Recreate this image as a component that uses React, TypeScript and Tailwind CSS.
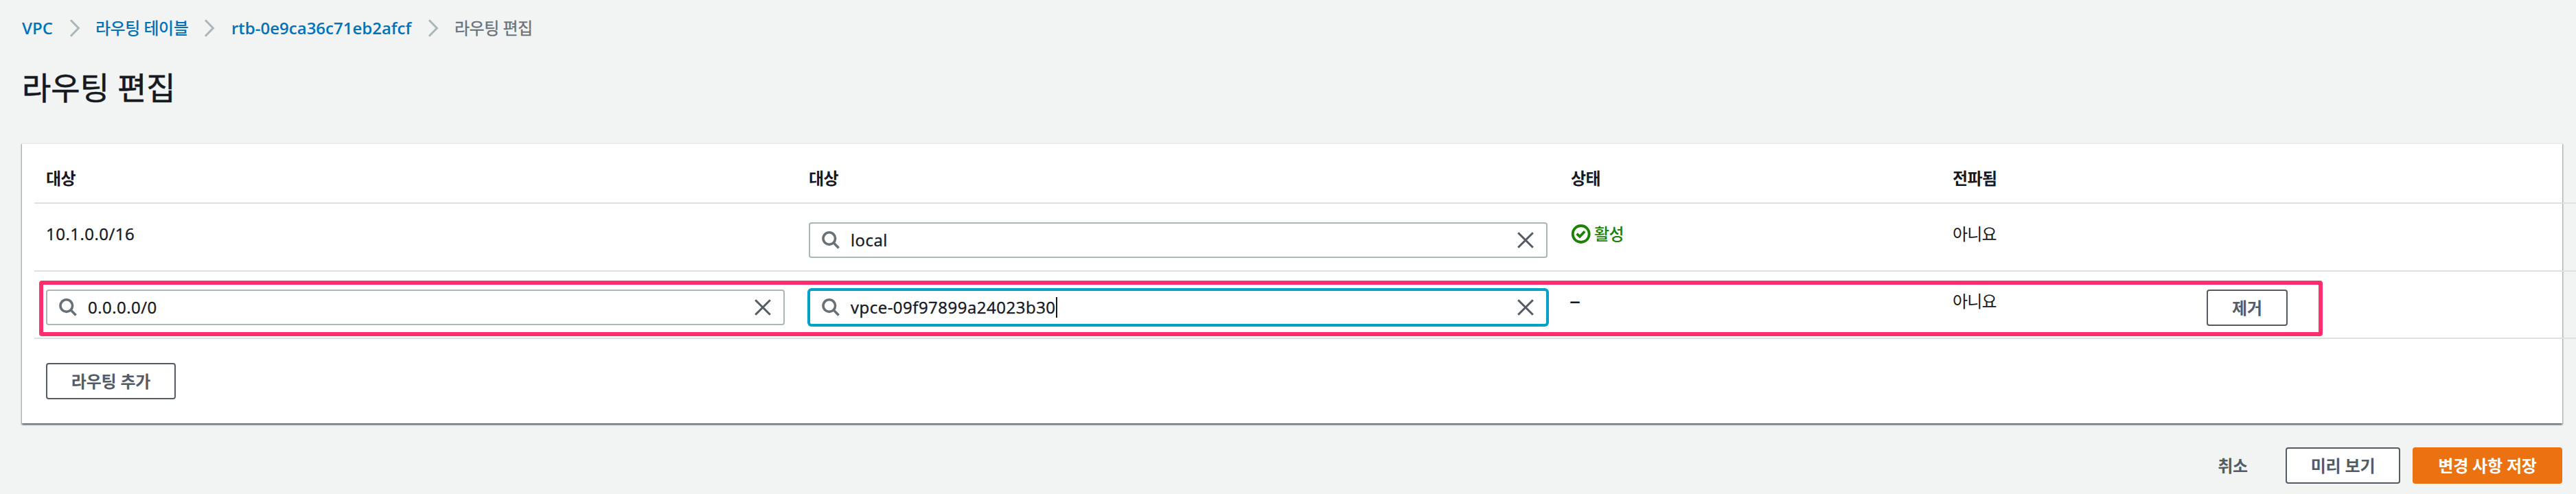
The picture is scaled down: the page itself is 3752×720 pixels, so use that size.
import React from "react";

function Chevron() {
  return (
    <svg className="h-[26px] w-4 shrink-0" viewBox="0 0 16 26" fill="none" stroke="#aab7b8" strokeWidth="3">
      <path d="M2 1.2 L13.4 13 L2 24.8" />
    </svg>
  );
}

function SearchIcon() {
  return (
    <svg className="h-[26px] w-[26px] shrink-0" viewBox="0 0 26 26" fill="none" stroke="#687078" strokeWidth="3.6">
      <circle cx="10.8" cy="10.6" r="8.8" />
      <path d="M16.8 16.6 L24.6 24.6" />
    </svg>
  );
}

function CloseIcon() {
  return (
    <svg className="h-6 w-6 shrink-0" viewBox="0 0 24 24" fill="none" stroke="#545b64" strokeWidth="3">
      <path d="M1.2 1.2 L22.8 22.8 M22.8 1.2 L1.2 22.8" />
    </svg>
  );
}

function StatusIcon() {
  return (
    <svg className="h-[29px] w-[29px] shrink-0" viewBox="0 0 29 29" fill="none" stroke="#1d8102" strokeWidth="3.8">
      <circle cx="14.7" cy="14" r="12" />
      <path d="M8.6 13.6 L13 17.8 L20.2 10.2" />
    </svg>
  );
}

function SearchField({ value, focused = false }: { value: string; focused?: boolean }) {
  return (
    <div
      className={
        focused
          ? "flex h-[52px] w-[1076px] items-center rounded-[4px] border-2 border-[#00a1c9] bg-white pr-[18px] pl-[17px] ring-2 ring-[#00a1c9]"
          : "flex h-[52px] w-[1076px] items-center rounded-[4px] border-2 border-[#aab7b8] bg-white pr-[18px] pl-[17px]"
      }
    >
      <SearchIcon />
      <span className="ml-4 flex grow items-center tracking-[0.5px] [-webkit-text-stroke:0.4px_#16191f]">
        {value}
        {focused && <span className="h-[30px] w-0.5 bg-[#16191f]" />}
      </span>
      <CloseIcon />
    </div>
  );
}

function Button({ children, className = "" }: { children: React.ReactNode; className?: string }) {
  return (
    <button
      className={
        "flex h-[53px] shrink-0 items-center justify-center rounded-[4px] border-2 border-[#545b64] bg-white font-bold tracking-[-0.2px] text-[#545b64] " +
        className
      }
    >
      {children}
    </button>
  );
}

const columns = "grid w-[3702px] grid-cols-[1111px_1110px_556px_370px_1fr] border-b-2 border-[#dfe0e0] pl-[17px]";

export default function App() {
  return (
    <div className="flex h-[720px] w-[3752px] flex-col overflow-hidden bg-[#f2f3f3] font-['Open_Sans','Noto_Sans_CJK_KR',sans-serif] text-[24px] leading-9 text-[#16191f]">
      <nav className="mt-[23px] flex h-9 shrink-0 items-center pl-8 font-semibold text-[#0073bb]">
        <a className="w-[69px]">VPC</a>
        <Chevron />
        <a className="ml-[22px] w-[158px] font-medium tracking-[-0.5px]">라우팅 테이블</a>
        <Chevron />
        <a className="ml-6 w-[286px]">rtb-0e9ca36c71eb2afcf</a>
        <Chevron />
        <span className="ml-[23px] font-normal tracking-[-0.5px] text-[#687078] [-webkit-text-stroke:0.3px_#687078]">라우팅 편집</span>
      </nav>

      <h1 className="mt-[38px] ml-8 h-[60px] shrink-0 text-[46px] leading-[60px] [-webkit-text-stroke:0.6px_#16191f]">
        라우팅 편집
      </h1>

      <main className="mt-[51px] ml-8 h-[409px] w-[3700px] shrink-0 border-t-2 border-[#eaeded] bg-white pl-[18px] shadow-[0_2px_2px_0_rgba(0,28,36,0.4),1px_2px_2px_0_rgba(0,28,36,0.25),-1px_2px_2px_0_rgba(0,28,36,0.25)]">
        <div className={columns + " h-[87px] pt-[32px] font-bold tracking-[-0.6px]"}>
          <span>대상</span>
          <span>대상</span>
          <span>상태</span>
          <span>전파됨</span>
        </div>
        <div className={columns + " h-[99px] items-start pt-[26px]"}>
          <span className="tracking-[0.5px] [-webkit-text-stroke:0.4px_#16191f]">10.1.0.0/16</span>
          <div className="pt-px">
            <SearchField value="local" />
          </div>
          <span className="flex items-center gap-[5px] font-medium tracking-[-0.6px] text-[#1d8102]">
            <StatusIcon />
            활성
          </span>
          <span className="tracking-[-0.8px]">아니요</span>
        </div>
        <div className={columns + " relative h-[98px] items-start pt-[25px]"}>
          <div className="pt-px">
            <SearchField value="0.0.0.0/0" />
          </div>
          <div className="pt-px">
            <SearchField value="vpce-09f97899a24023b30" focused />
          </div>
          <span className="-mt-px -ml-0.5 text-[32px] leading-9">–</span>
          <span className="tracking-[-0.8px]">아니요</span>
          <div className="pt-px">
            <Button className="w-[118px]">제거</Button>
          </div>
          <div className="pointer-events-none absolute top-[13px] left-[7px] h-[81px] w-[3326px] rounded-[4px] border-6 border-[#ff2e6c]" />
        </div>
        <div className="pt-[35px] pl-[17px]">
          <Button className="w-[189px]">라우팅 추가</Button>
        </div>
      </main>

      <footer className="mt-[35px] flex shrink-0 items-center justify-end pr-5">
        <button className="mr-[55px] font-bold tracking-[-0.2px] text-[#545b64]">취소</button>
        <Button className="mr-[18px] w-[167px]">미리 보기</Button>
        <button className="h-[53px] w-[218px] rounded-[4px] bg-[#ec7211] font-bold tracking-[-0.2px] text-white">변경 사항 저장</button>
      </footer>
    </div>
  );
}
